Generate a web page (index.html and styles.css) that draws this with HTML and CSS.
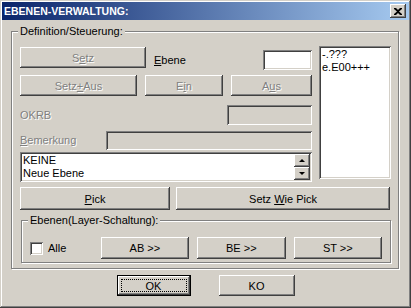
FILE: index.html
```html
<!DOCTYPE html>
<html lang="de">
<head>
  <meta charset="UTF-8">
  <title>Ebenen-Verwaltung</title>
  <link rel="stylesheet" href="styles.css">
</head>
<body>
  <div class="window">
    <!-- Title bar -->
    <div class="titlebar">
      <span class="title">EBENEN-VERWALTUNG:</span>
      <div class="close raised">
        <svg width="8" height="7" viewBox="0 0 8 7">
          <path d="M0 0h2l2 2 2-2h2v1L5 3.5 8 6v1H6L4 5 2 7H0V6l3-2.5L0 1z" fill="#000"/>
        </svg>
      </div>
    </div>

    <div class="client">
      <fieldset class="group group-def">
        <legend>Definition/Steuerung:</legend>

        <div class="def-top">
          <div class="def-left">
            <div class="row row-setz">
              <div class="btn btn-setz disabled"><span>S<u>e</u>tz</span></div>
              <span class="lbl lbl-ebene"><u>E</u>bene</span>
              <div class="edit edit-ebene"></div>
            </div>

            <div class="row row-aus">
              <div class="btn btn-setzaus disabled"><span>Setz<u>+</u>Aus</span></div>
              <div class="btn btn-ein disabled"><span>E<u>i</u>n</span></div>
              <div class="btn btn-aus disabled"><span>A<u>u</u>s</span></div>
            </div>

            <div class="row row-okrb">
              <span class="lbl disabled">OKRB</span>
              <div class="edit edit-okrb readonly"></div>
            </div>

            <div class="row row-bem">
              <span class="lbl disabled"><u>B</u>emerkung</span>
              <div class="edit edit-bem readonly"></div>
            </div>

            <div class="edit list-small">
              <div class="list-lines">
                <div>KEINE</div>
                <div>Neue Ebene</div>
              </div>
              <div class="spin">
                <div class="spin-btn raised"><span class="arrow-up"></span></div>
                <div class="spin-btn raised"><span class="arrow-down"></span></div>
              </div>
            </div>
          </div>

          <div class="edit list-big">
            <div>-.???</div>
            <div>e.E00+++</div>
          </div>
        </div>

        <div class="row row-pick">
          <div class="btn btn-pick"><span><u>P</u>ick</span></div>
          <div class="btn btn-wiepick"><span>Setz <u>W</u>ie Pick</span></div>
        </div>

        <fieldset class="group group-layer">
          <legend>Ebenen(Layer-Schaltung):</legend>
          <div class="row row-layer">
            <div class="check-wrap">
              <span class="checkbox"></span>
              <span class="lbl">Alle</span>
            </div>
            <div class="btn btn-layer"><span>AB &gt;&gt;</span></div>
            <div class="btn btn-layer"><span>BE &gt;&gt;</span></div>
            <div class="btn btn-layer"><span>ST &gt;&gt;</span></div>
          </div>
        </fieldset>
      </fieldset>

      <div class="footer">
        <div class="btn btn-ok"><span>OK</span></div>
        <div class="btn btn-ko"><span>KO</span></div>
      </div>
    </div>
  </div>
</body>
</html>
```

FILE: styles.css
```css
/* Classic grey dialog look */
body {
  margin: 0;
  font-family: "Liberation Sans", Arial, sans-serif;
  font-size: 11px;
  color: #000;
  background-color: #d4d0c8;
}

.window {
  width: 411px;
  height: 308px;
  box-sizing: border-box;
  padding: 2px;
  background-color: #d4d0c8;
  box-shadow: inset -1px -1px #404040, inset 1px 1px #d4d0c8, inset -2px -2px #808080, inset 2px 2px #fff;
  display: flex;
  flex-direction: column;
}

.titlebar {
  height: 18px;
  display: flex;
  align-items: center;
  padding-left: 2px;
  background: linear-gradient(to right, #0a246a, #a6caf0);
}

.title {
  flex: 1;
  color: #fff;
  font-weight: bold;
  font-size: 10.5px;
}

.raised {
  background-color: #d4d0c8;
  box-shadow: inset -1px -1px #404040, inset 1px 1px #fff, inset -2px -2px #808080, inset 2px 2px #d4d0c8;
}

.close {
  width: 16px;
  height: 14px;
  margin-right: 3px;
  display: flex;
  align-items: center;
  justify-content: center;
}

.client {
  display: flex;
  flex-direction: column;
}

/* Group boxes */
.group {
  margin: 0;
  min-width: 0;
  border: 1px solid #808080;
  box-shadow: inset 1px 1px #fff, 1px 1px #fff;
}

.group legend {
  padding: 0 2px;
  margin-left: -2px;
  line-height: 13px;
  background-color: #d4d0c8;
}

.group-def {
  margin: 5px 10px 0 9px;
  padding: 8px 7px 5px 8px;
}

.group-layer {
  margin: 4px 0 0 1px;
  padding: 10px 8px 3px 8px;
}

/* Buttons */
.btn {
  box-sizing: border-box;
  height: 21px;
  display: flex;
  align-items: center;
  justify-content: center;
  background-color: #d4d0c8;
  box-shadow: inset -1px -1px #404040, inset 1px 1px #fff, inset -2px -2px #808080, inset 2px 2px #d4d0c8;
}

.disabled {
  color: #808080;
  text-shadow: 1px 1px #fff;
}

/* Sunken fields */
.edit {
  box-sizing: border-box;
  background-color: #fff;
  box-shadow: inset 1px 1px #808080, inset -1px -1px #fff, inset 2px 2px #404040, inset -2px -2px #d4d0c8;
}

.edit.readonly {
  background-color: #d4d0c8;
}

.def-top {
  display: flex;
  align-items: flex-start;
  gap: 7px;
}

.def-left {
  width: 292px;
  margin-top: 1px;
  display: flex;
  flex-direction: column;
}

.row {
  display: flex;
  align-items: center;
}

.lbl {
  line-height: 13px;
}

.row-setz {
  align-items: flex-start;
  height: 23px;
}

.btn-setz {
  width: 126px;
}

.lbl-ebene {
  margin: 7px 0 0 8px;
  flex: 1;
}

.edit-ebene {
  width: 49px;
  height: 20px;
  margin-top: 3px;
}

.row-aus {
  margin-top: 5px;
  gap: 8px;
}

.btn-setzaus {
  width: 117px;
}

.btn-ein {
  width: 78px;
}

.btn-aus {
  flex: 1;
}

.row-okrb {
  margin-top: 9px;
  justify-content: space-between;
}

.edit-okrb {
  width: 85px;
  height: 20px;
}

.row-bem {
  margin-top: 6px;
  justify-content: space-between;
}

.edit-bem {
  width: 206px;
  height: 19px;
}

.list-small {
  margin-top: 2px;
  height: 30px;
  padding: 2px;
  display: flex;
  line-height: 13px;
}

.list-lines {
  flex: 1;
  padding-left: 1px;
}

.spin {
  width: 16px;
  display: flex;
  flex-direction: column;
}

.spin-btn {
  height: 13px;
  display: flex;
  align-items: center;
  justify-content: center;
}

.arrow-up {
  border-left: 3px solid transparent;
  border-right: 3px solid transparent;
  border-bottom: 3px solid #000;
}

.arrow-down {
  border-left: 3px solid transparent;
  border-right: 3px solid transparent;
  border-top: 3px solid #000;
}

.list-big {
  width: 72px;
  height: 133px;
  padding: 2px 3px;
  line-height: 13px;
}

.row-pick {
  margin-top: 5px;
  gap: 6px;
}

.row-pick .btn {
  height: 23px;
}

.btn-pick {
  width: 150px;
}

.btn-wiepick {
  flex: 1;
  margin-right: 1px;
}

.row-layer {
  gap: 8px;
}

.check-wrap {
  width: 63px;
  display: flex;
  align-items: center;
  gap: 5px;
}

.checkbox {
  width: 13px;
  height: 13px;
  box-sizing: border-box;
  background-color: #fff;
  box-shadow: inset 1px 1px #808080, inset -1px -1px #fff, inset 2px 2px #404040, inset -2px -2px #d4d0c8;
}

.btn-layer {
  width: 89px;
  height: 22px;
}

.footer {
  margin-top: 6px;
  display: flex;
  justify-content: center;
  gap: 28px;
}

.btn-ok {
  width: 74px;
  border: 1px solid #000;
  outline: 1px dotted #000;
  outline-offset: -5px;
}

.btn-ko {
  width: 76px;
}
```
